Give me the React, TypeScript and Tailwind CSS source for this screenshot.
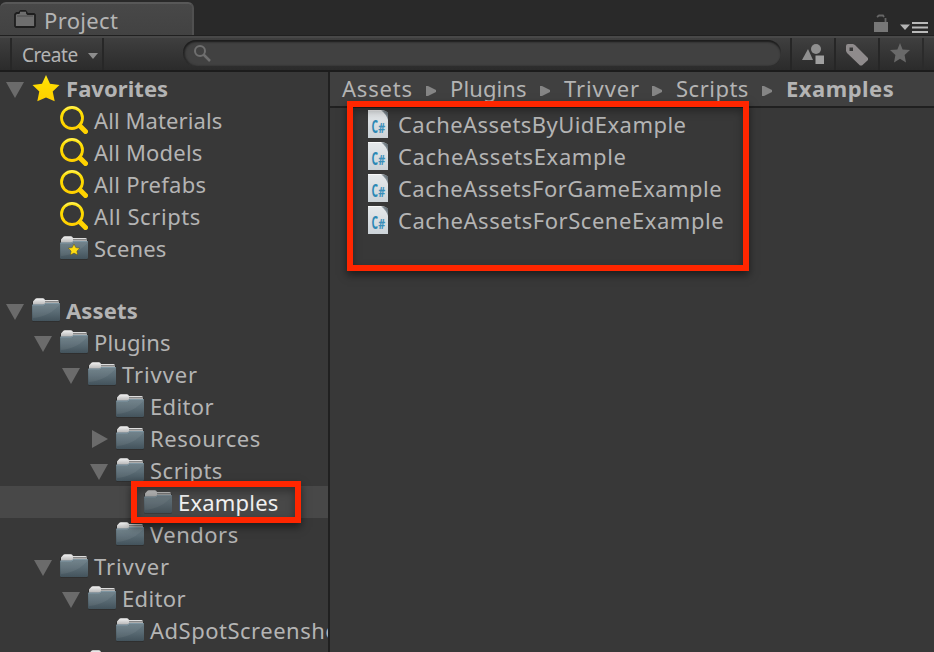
import React from "react";

type Kind = "star" | "search" | "scene" | "folder";
type Item = {
  label: string;
  kind: Kind;
  pad: string;
  arrow?: "down" | "right";
  bold?: boolean;
  selected?: boolean;
  tracking?: string;
};

const favorites: Item[] = [
  { label: "Favorites", kind: "star", pad: "pl-[6px]", arrow: "down", bold: true, tracking: "tracking-[0.05px]" },
  { label: "All Materials", kind: "search", pad: "pl-[34px]", tracking: "tracking-[0.1px]" },
  { label: "All Models", kind: "search", pad: "pl-[34px]", tracking: "tracking-[0.2px]" },
  { label: "All Prefabs", kind: "search", pad: "pl-[34px]", tracking: "tracking-[0.25px]" },
  { label: "All Scripts", kind: "search", pad: "pl-[34px]", tracking: "tracking-[0.58px]" },
  { label: "Scenes", kind: "scene", pad: "pl-[34px]", tracking: "tracking-[0.15px]" },
];

const assets: Item[] = [
  { label: "Assets", kind: "folder", pad: "pl-[6px]", arrow: "down", bold: true, tracking: "tracking-[0.15px]" },
  { label: "Plugins", kind: "folder", pad: "pl-[34px]", arrow: "down", tracking: "tracking-[0.1px]" },
  { label: "Trivver", kind: "folder", pad: "pl-[62px]", arrow: "down", tracking: "tracking-[0.9px]" },
  { label: "Editor", kind: "folder", pad: "pl-[90px]", tracking: "tracking-[0.35px]" },
  { label: "Resources", kind: "folder", pad: "pl-[90px]", arrow: "right", tracking: "tracking-[0.58px]" },
  { label: "Scripts", kind: "folder", pad: "pl-[90px]", arrow: "down" },
  { label: "Examples", kind: "folder", pad: "pl-[118px]", selected: true, tracking: "tracking-[0.2px]" },
  { label: "Vendors", kind: "folder", pad: "pl-[90px]" },
  { label: "Trivver", kind: "folder", pad: "pl-[34px]", arrow: "down", tracking: "tracking-[0.9px]" },
  { label: "Editor", kind: "folder", pad: "pl-[62px]", arrow: "down", tracking: "tracking-[0.35px]" },
  { label: "AdSpotScreenshot", kind: "folder", pad: "pl-[90px]" },
  { label: "", kind: "folder", pad: "pl-[62px]" },
];

const files = [
  { name: "CacheAssetsByUidExample", tracking: "tracking-[0.45px]" },
  { name: "CacheAssetsExample", tracking: "tracking-[0.63px]" },
  { name: "CacheAssetsForGameExample", tracking: "tracking-[0.47px]" },
  { name: "CacheAssetsForSceneExample", tracking: "tracking-[0.54px]" },
];

function Defs() {
  return (
    <svg className="absolute size-0" aria-hidden="true">
      <defs>
        <linearGradient id="front" x1="0" y1="0" x2="0" y2="1">
          <stop offset="0" stopColor="#6b7e87" />
          <stop offset="0.5" stopColor="#5a6b74" />
          <stop offset="1" stopColor="#43535c" />
        </linearGradient>
        <linearGradient id="paper" x1="0" y1="0" x2="0" y2="1">
          <stop offset="0" stopColor="#f4f4f4" />
          <stop offset="1" stopColor="#a9a9a9" />
        </linearGradient>
        <linearGradient id="gold" x1="0" y1="0" x2="0" y2="1">
          <stop offset="0" stopColor="#ffe81e" />
          <stop offset="0.35" stopColor="#ffdc00" />
          <stop offset="1" stopColor="#ffd000" />
        </linearGradient>
        <linearGradient id="sheet" x1="0" y1="0" x2="0" y2="1">
          <stop offset="0" stopColor="#e6e9eb" />
          <stop offset="1" stopColor="#ccd3d8" />
        </linearGradient>
        <linearGradient id="fold" x1="0" y1="1" x2="1" y2="0">
          <stop offset="0" stopColor="#f5f7f8" />
          <stop offset="0.35" stopColor="#aab4ba" />
          <stop offset="1" stopColor="#46525a" />
        </linearGradient>
      </defs>
    </svg>
  );
}

function Folder({ star, dim }: { star?: boolean; dim?: boolean }) {
  return (
    <svg width="28" height="26" viewBox="0 0 28 26" className={dim ? "overflow-visible opacity-80" : "overflow-visible"}>
      <rect x="0" y="4" width="28" height="20.8" rx="1.5" fill="#222" opacity="0.55" />
      <path d="M1 9V4.5L3 2.2Q3.6 1.2 5 1.2H11Q12.4 1.2 13 3H25.5Q27 3 27 4.6V9Z" fill="url(#paper)" />
      <path d="M13.5 5H27V4.6H13Z" fill="#777" stroke="#777" strokeWidth="0.6" />
      <path d="M0 8.4Q0 7.6 .9 7.6H11.4L13.6 5.9H27.1Q28 5.9 28 6.8V22.8Q28 24 26.8 24H1.2Q0 24 0 22.8Z" fill="url(#front)" />
      <path d="M.4 8.2H11.6L13.8 6.5H27.6" fill="none" stroke="#8199a5" strokeWidth="0.9" />
      <path d="M1 21C13 20 21 15 27.5 8V7H14L12 9H1Z" fill="#fff" opacity="0.06" />
      {star && <path d="M14 9l1.8 3.600 4 .6-2.900 2.800.7 4L14 18.100l-3.600 1.900.7-4-2.900-2.800 4-.6Z" fill="#ffdc12" stroke="#554d20" strokeWidth="0.5" />}
    </svg>
  );
}

function StarIcon() {
  return (
    <svg width="28" height="28" viewBox="0 0 28 28">
      <path d="M14 1L18 9.700L27.500 10.900L20.700 17.500L22.700 27.300L14 23.500L5.300 27.300L7.300 17.500L.5 10.900L10 9.700Z" fill="url(#gold)" />
    </svg>
  );
}

function SearchGold() {
  return (
    <svg width="28" height="28" viewBox="0 0 28 28">
      <path d="M20 20l5.500 5.500" stroke="#ffd200" strokeWidth="5" strokeLinecap="round" />
      <circle cx="12" cy="12" r="10.500" fill="none" stroke="url(#gold)" strokeWidth="2.800" />
      <path d="M4.500 3.800Q8 .8 12 .8Q16 .8 19.500 3.800" fill="none" stroke="#fff27a" strokeWidth="0.8" />
    </svg>
  );
}

function ItemIcon({ kind, dim }: { kind: Kind; dim?: boolean }) {
  if (kind === "star") return <StarIcon />;
  if (kind === "search") return <SearchGold />;
  return <Folder star={kind === "scene"} dim={dim} />;
}

function Foldout({ dir }: { dir?: "down" | "right" }) {
  return (
    <span className="flex h-full w-[26px] shrink-0 items-center pt-[4px]">
      {dir === "down" && (
        <svg width="18" height="16" viewBox="0 0 18 16"><path d="M0 0H18L9 16Z" fill="#6b6b6b" /></svg>
      )}
      {dir === "right" && (
        <svg width="18" height="18" viewBox="0 0 18 18" className="mb-[2px]"><path d="M2 0V18L18 9Z" fill="#6b6b6b" /></svg>
      )}
    </span>
  );
}

function Row({ item }: { item: Item }) {
  return (
    <div className={`flex h-8 shrink-0 items-center whitespace-nowrap ${item.pad} ${item.selected ? "bg-[#484848] text-[#f0f0f0]" : ""}`}>
      <Foldout dir={item.arrow} />
      <span className="w-7 shrink-0"><ItemIcon kind={item.kind} dim={item.selected} /></span>
      <span className={`pl-[6px] leading-8 ${item.bold ? "font-bold" : ""} ${item.tracking ?? "tracking-[0.5px]"}`}>{item.label}</span>
    </div>
  );
}

function ScriptIcon() {
  return (
    <svg width="20" height="28" viewBox="0 0 20 28" className="shrink-0">
      <path d="M0 0H14Q18 .5 20 3V28H0Z" fill="url(#sheet)" />
      <path d="M0 .4H14" stroke="#fff" strokeWidth="0.8" />
      <path d="M13 .3Q18 .5 20 3V10Q18 4 13 .3Z" fill="url(#fold)" />
      <text x="3.500" y="23" fontFamily="Open Sans, sans-serif" fontSize="17" fontWeight="700" fill="#2b88b5" textLength="6.500" lengthAdjust="spacingAndGlyphs">C</text>
      <text x="10.300" y="22.500" fontFamily="Open Sans, sans-serif" fontSize="13.500" fontWeight="700" fill="#3a8fba" textLength="6.900" lengthAdjust="spacingAndGlyphs">#</text>
    </svg>
  );
}

function Crumb({ children }: { children: React.ReactNode }) {
  return <span className="flex items-center">{children}</span>;
}

function CrumbArrow() {
  return (
    <svg width="10" height="10" viewBox="0 0 10 10" className="mt-[5px] shrink-0">
      <path d="M0 0H2L6 2L10 4V6L6 8L2 10H0Z" fill="#858585" />
    </svg>
  );
}

export default function App() {
  return (
    <div className="relative flex h-[652px] w-[934px] flex-col overflow-hidden bg-[#383838] font-['Noto_Sans',sans-serif] text-[22px] text-[#b4b4b4]">
      <Defs />
      <header className="flex h-9 shrink-0 items-end justify-between bg-[#292929]">
        <div className="flex h-[34px] w-[194px] items-center rounded-t-[6px] border-t-2 border-r-2 border-t-[#585858] border-r-[#505050] bg-linear-to-b from-[#484848] to-[#424242] pl-[14px]">
          <svg width="22" height="18" viewBox="0 0 22 18" className="mb-[2px]">
            <path d="M1 16V4.500L2.500 3H5L6.500 1H11.500L13.500 4H20L21 5V16L20 17H2Z" fill="#6e6e6e" stroke="#1e1e1e" strokeWidth="1.800" strokeLinejoin="round" />
            <path d="M6 2.500H12" stroke="#6e6e6e" strokeWidth="1.500" />
            <path d="M3 6H19" stroke="#5c5c5c" strokeWidth="2" />
          </svg>
          <span className="pl-[8px] leading-8 tracking-[0.350px]">Project</span>
        </div>
        <div className="flex h-full items-end pr-[6px]">
          <svg width="14" height="19" viewBox="0 0 14 19" className="mb-[3px]">
            <path d="M0 8H14V18H0Z" fill="#777" />
            <path d="M11.500 8V4M10 3L9 1.500H5L3 3" fill="none" stroke="#666" strokeWidth="1.800" />
          </svg>
          <svg width="28" height="11" viewBox="0 0 28 11" className="mb-[3px] ml-[12px]">
            <path d="M0 2.500H10L5 8Z" fill="#b4b4b4" />
            <path d="M12 1H28M12 5.500H28M12 10H28" stroke="#b9b9b9" strokeWidth="2" />
          </svg>
        </div>
      </header>

      <div className="flex h-9 shrink-0 border-t-2 border-b-2 border-t-[#484848] border-b-[#1c1c1c] bg-linear-to-b from-[#3f3f3f] to-[#2b2b2b] shadow-[0_-1px_0_#202020]">
        <div className="w-3 shrink-0 border-r-2 border-[#272727]" />
        <button className="flex w-[92px] shrink-0 items-center border-r-2 border-[#272727] pl-[10px] text-[19px] leading-8 tracking-[-0.450px]">
          <span className="pt-px">Create</span>
          <svg width="10" height="6" viewBox="0 0 10 6" className="mt-[4px] ml-[10px] shrink-0"><path d="M0 0H10L5 6Z" fill="#8d8d8d" /></svg>
        </button>
        <div className="mt-[2px] ml-[79px] flex h-[26px] w-[598px] items-center rounded-full bg-[#414141] pl-[11px] shadow-[inset_0_2px_2px_#1c1c1c,inset_2px_0_2px_#292929]">
          <svg width="17" height="17" viewBox="0 0 17 17">
            <circle cx="6" cy="6" r="5" fill="none" stroke="#6f6f6f" strokeWidth="2" />
            <path d="M9.500 9.500L16 16" stroke="#6f6f6f" strokeWidth="2.500" />
          </svg>
        </div>
        <div className="ml-[9px] flex border-l-2 border-[#262626]">
          <div className="flex w-[44px] justify-center border-r-2 border-[#262626] pt-[6px]">
            <svg width="22" height="20" viewBox="0 0 22 20">
              <path d="M0 16L6 5L11 16Z" fill="#8f8f8f" /><circle cx="14" cy="5" r="5" fill="#8f8f8f" /><path d="M13 10.500H22V20H13Z" fill="#333" /><path d="M13.500 11.500H22V20H13.500Z" fill="#a0a0a0" />
            </svg>
          </div>
          <div className="flex w-[44px] justify-center border-r-2 border-[#262626] pt-[6px]">
            <svg width="22" height="22" viewBox="0 0 22 22">
              <path fillRule="evenodd" d="M0 2Q0 0 2 0H7L9 1L22 14V16L16 21.500H14L1 9L0 7ZM3.500 3.500V7H7V3.500Z" fill="#8f8b8c" />
            </svg>
          </div>
          <div className="flex w-[44px] justify-center border-r-2 border-[#2b2b2b] pt-[5px] pr-[2px]">
            <svg width="20" height="20" viewBox="0 0 20 20"><path d="M10 0l2.600 6.500L20 7l-5.400 5L16 19.500l-6-3.700-6 3.700L5.400 12 0 7l7.400-.5Z" fill="#696969" /></svg>
          </div>
        </div>
      </div>

      <div className="flex min-h-0 flex-1">
        <aside className="flex w-[330px] shrink-0 flex-col overflow-hidden border-r-2 border-[#202020]">
          {favorites.map((i) => <Row key={i.label} item={i} />)}
          <div className="h-[30px] shrink-0" />
          {assets.map((i, n) => <Row key={n} item={i} />)}
        </aside>
        <main className="flex-1">
          <nav className="flex h-9 items-center border-b-2 border-[#202020] bg-[#404040] pb-[2px] pl-[12px] leading-8">
            <Crumb><span className="w-[84px] tracking-[0.8px]">Assets</span><CrumbArrow /></Crumb>
            <Crumb><span className="w-[104px] pl-[14px] tracking-[0.1px]">Plugins</span><CrumbArrow /></Crumb>
            <Crumb><span className="w-[102px] pl-[14px] tracking-[0.9px]">Trivver</span><CrumbArrow /></Crumb>
            <Crumb><span className="w-[100px] pl-[14px] tracking-[0.5px]">Scripts</span><CrumbArrow /></Crumb>
            <span className="pl-[14px] font-bold tracking-[0.5px]">Examples</span>
          </nav>
          <ul>
            {files.map((f) => (
              <li key={f.name} className="flex h-8 items-center">
                <span className="flex pl-[38px]"><ScriptIcon /></span>
                <span className={`pb-px pl-[10px] leading-8 ${f.tracking}`}>{f.name}</span>
              </li>
            ))}
          </ul>
        </main>
      </div>

      <div className="absolute top-[101px] left-[347px] h-[170px] w-[402px] border-6 border-[#ff2600] shadow-[0_4px_8px_rgba(0,0,0,0.5),inset_0_4px_8px_rgba(0,0,0,0.35)]" />
      <div className="absolute top-[481px] left-[131px] h-[42px] w-[170px] border-6 border-[#ff2600] shadow-[0_4px_8px_rgba(0,0,0,0.5),inset_0_4px_8px_rgba(0,0,0,0.35)]" />
    </div>
  );
}
